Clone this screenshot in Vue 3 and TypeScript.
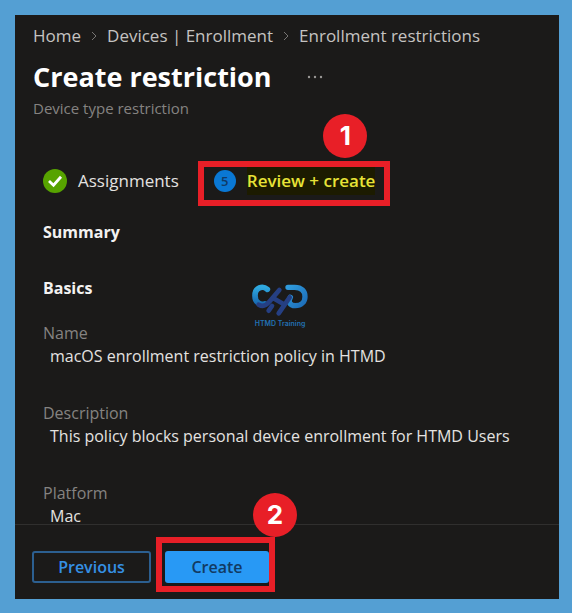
<script setup lang="ts">
interface Crumb {
  label: string
  href: string
}

interface Field {
  label: string
  value: string
}

const crumbs: Crumb[] = [
  { label: 'Home', href: '#home' },
  { label: 'Devices | Enrollment', href: '#enrollment' },
  { label: 'Enrollment restrictions', href: '#restrictions' },
]

const fields: Field[] = [
  { label: 'Name', value: 'macOS enrollment restriction policy in HTMD' },
  { label: 'Description', value: 'This policy blocks personal device enrollment for HTMD Users' },
  { label: 'Platform', value: 'Mac' },
]
</script>

<template>
  <div class="frame">
    <main class="panel">
      <header class="head">
        <nav class="crumbs" aria-label="Breadcrumb">
          <template v-for="(crumb, i) in crumbs" :key="crumb.label">
            <svg v-if="i > 0" class="chevron" viewBox="0 0 6 10" aria-hidden="true">
              <path d="M1 1l4 4-4 4" />
            </svg>
            <a :href="crumb.href">{{ crumb.label }}</a>
          </template>
        </nav>
        <div class="title-row">
          <h1>Create restriction</h1>
          <button class="more" type="button" aria-label="More actions">
            <svg viewBox="0 0 16 4" aria-hidden="true">
              <circle cx="2" cy="2" r="1.2" />
              <circle cx="8" cy="2" r="1.2" />
              <circle cx="14" cy="2" r="1.2" />
            </svg>
          </button>
        </div>
        <p class="subtitle">Device type restriction</p>
      </header>

      <nav class="steps" aria-label="Steps">
        <a class="step" href="#assignments">
          <svg class="step-icon" viewBox="0 0 24 24" aria-hidden="true">
            <circle cx="12" cy="12" r="12" fill="#57a300" />
            <path d="M6 12l4.5 4.2 7.5-8.4" fill="none" stroke="#fff" stroke-width="2.8" />
          </svg>
          <span>Assignments</span>
        </a>
        <a class="step current" href="#review" aria-current="step">
          <span class="number">5</span>
          <span class="marked">Review + create</span>
          <span class="outline"></span>
          <span class="badge">1</span>
        </a>
      </nav>

      <section class="content">
        <h2>Summary</h2>
        <h2>Basics</h2>
        <dl>
          <div v-for="field in fields" :key="field.label" class="field">
            <dt>{{ field.label }}</dt>
            <dd>{{ field.value }}</dd>
          </div>
        </dl>
      </section>

      <footer class="actions">
        <button class="btn" type="button">Previous</button>
        <div class="target">
          <button class="btn primary" type="button">Create</button>
          <span class="outline"></span>
          <span class="badge">2</span>
        </div>
      </footer>

      <div class="watermark">
        <svg viewBox="0 0 168 102" aria-hidden="true">
          <defs>
            <linearGradient id="loopLeft" x1="0" y1="0" x2="0" y2="1">
              <stop offset="0" stop-color="#2fa9e0" />
              <stop offset="1" stop-color="#1767b0" />
            </linearGradient>
            <linearGradient id="loopRight" x1="0" y1="0" x2="1" y2="1">
              <stop offset="0" stop-color="#2f9bdc" />
              <stop offset="1" stop-color="#1d6db8" />
            </linearGradient>
          </defs>
          <g fill="none" stroke-linecap="round" stroke-linejoin="round" stroke-width="15">
            <path d="M46 16C32 4 9 10 9 35C9 55 24 64 38 60" stroke="url(#loopLeft)" stroke-width="17" />
            <path d="M108 10H128C149 10 159 22 159 38C159 54 147 65 130 65C112 65 108 52 115 40" stroke="url(#loopRight)" stroke-width="16" />
            <path d="M20 62C34 70 45 62 52 53L82 18M63 42L98 62M113 40L80 88M60 66L50 80" stroke="#253f83" stroke-width="14" />
          </g>
        </svg>
        <span>HTMD Training</span>
      </div>
    </main>
  </div>
</template>

<style>
body {
  margin: 0;
}
</style>

<style scoped>
.frame {
  box-sizing: border-box;
  height: 100vh;
  padding: 15px 13px 14px 15px;
  background: #549fd3;
  font-family: "Open Sans", "Noto Sans", sans-serif;
}

.panel {
  position: relative;
  display: flex;
  flex-direction: column;
  height: 100%;
  background: #1b1a19;
  color: #e4e2e0;
}

.head {
  padding: 9px 18px 0;
}

.crumbs {
  display: flex;
  align-items: center;
  gap: 10px;
  font-size: 17px;
  line-height: 24px;
  white-space: nowrap;
}

.crumbs a {
  color: #c5c3c1;
  text-decoration: none;
}

.chevron {
  width: 6px;
  height: 10px;
  fill: none;
  stroke: #777573;
}

.title-row {
  display: flex;
  align-items: center;
  gap: 35px;
  margin-top: 9px;
}

h1 {
  margin: 0;
  color: #fff;
  font-size: 27px;
  font-weight: 700;
  line-height: 40px;
}

.more {
  display: flex;
  padding: 0;
  border: 0;
  background: none;
}

.more svg {
  width: 16px;
  height: 4px;
  fill: #9a9896;
}

.subtitle {
  margin: 0;
  color: #858381;
  font-size: 15px;
  line-height: 22px;
}

.steps {
  display: flex;
  gap: 19px;
  margin-top: 42px;
  padding: 0 28px;
  font-size: 17px;
  line-height: 40px;
}

.step {
  position: relative;
  display: flex;
  align-items: center;
  gap: 11px;
  padding-bottom: 5px;
  color: #e4e2e0;
  text-decoration: none;
  white-space: nowrap;
}

.step-icon {
  width: 24px;
  height: 24px;
}

.current {
  padding: 0 15px 5px 16px;
  color: #e8e337;
  font-weight: 600;
}

.number {
  width: 22px;
  border-radius: 50%;
  background: #0a78d4;
  color: #103a66;
  font-size: 13px;
  line-height: 22px;
  text-align: center;
}

.marked {
  background: #1c1b00;
  line-height: 28px;
}

.outline {
  position: absolute;
  inset: 0;
  border: 6px solid #e81f27;
  pointer-events: none;
}

.badge {
  position: absolute;
  top: -47px;
  right: 23px;
  width: 44px;
  border-radius: 50%;
  background: #e81f27;
  color: #fff;
  font-family: Inter, sans-serif;
  font-size: 26px;
  font-weight: 700;
  line-height: 44px;
  text-align: center;
}

.content {
  flex: 1;
  min-height: 0;
  padding: 14px 28px 0;
}

h2 {
  margin: 0 0 32px;
  color: #f3f2f1;
  font-size: 16px;
  font-weight: 700;
  line-height: 24px;
}

dl {
  margin: -10px 0 0;
}

.field {
  margin-bottom: 34px;
}

dt {
  color: #858381;
  font-size: 16px;
  line-height: 23px;
}

dd {
  margin: 0 0 0 7px;
  font-size: 16px;
  line-height: 23px;
  white-space: nowrap;
}

.actions {
  display: flex;
  gap: 14px;
  padding: 26px 17px 16px;
  border-top: 1px solid #302f2e;
}

.btn {
  box-sizing: border-box;
  width: 119px;
  height: 32px;
  padding: 0;
  border: 2px solid #2c5f90;
  border-radius: 3px;
  background: none;
  color: #3590e4;
  font-family: inherit;
  font-size: 16px;
  font-weight: 600;
}

.target {
  position: relative;
}

.primary {
  display: block;
  width: 104px;
  border: 0;
  background: #2899f5;
  color: #123a62;
}

.target .outline {
  inset: -14px -6px -9px -9px;
}

.target .badge {
  top: -58px;
  right: -28px;
}

.watermark {
  position: absolute;
  top: 269px;
  left: 237px;
  width: 56px;
  color: #2271b3;
  font-family: Inter, sans-serif;
  font-size: 7px;
  font-weight: 600;
  line-height: 12px;
  text-align: center;
  white-space: nowrap;
}

.watermark svg {
  display: block;
  width: 56px;
  height: 34px;
}
</style>
